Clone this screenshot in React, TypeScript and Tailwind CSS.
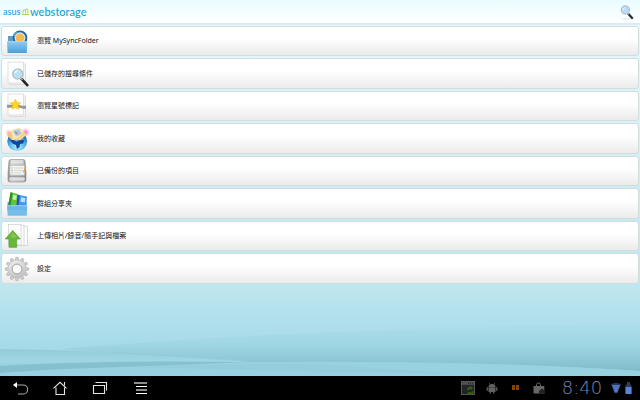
import type { ReactNode } from "react";

function Paper({ x = 5, y = 2 }: { x?: number; y?: number }) {
  return (
    <g stroke="#d4d4d4" strokeWidth="0.7">
      <rect x={x + 2} y={y + 2} width="15.5" height="20.5" fill="#f4f4f4" />
      <rect x={x} y={y} width="15.5" height="21" fill="#fdfdfd" />
    </g>
  );
}

function SyncFolderIcon() {
  return (
    <svg viewBox="0 0 28 28" className="size-7">
      <defs>
        <linearGradient id="syncFront" x1="0" y1="0" x2="0" y2="1">
          <stop offset="0" stopColor="#90ccf0" />
          <stop offset="1" stopColor="#4b9fda" />
        </linearGradient>
      </defs>
      <path d="M5 9h5.5l1.2 2H24v10H5z" fill="#5a9fcd" />
      <circle cx="17" cy="10.8" r="6.4" fill="#dfeaf0" stroke="#1d6ba6" strokeWidth="1.9" />
      <path d="M10.8 9a6.4 6.4 0 0 1 3.4-4" fill="none" stroke="#5aa5d6" strokeWidth="1.8" />
      <circle cx="17" cy="10.8" r="4.4" fill="#f9b94c" />
      <path d="M4 14.3h20.3l-.5 11.7H4.6z" fill="url(#syncFront)" />
      <path d="M4.3 14.7h19.6" stroke="#b5dff7" strokeWidth="0.7" />
    </svg>
  );
}

function SavedSearchIcon() {
  return (
    <svg viewBox="0 0 28 28" className="size-7">
      <Paper />
      <path d="M18.5 18.9l5.8 6.3" stroke="#262626" strokeWidth="2.6" strokeLinecap="round" />
      <path d="M17.6 17.8l2 2.2" stroke="#999" strokeWidth="1.6" />
      <circle cx="14.8" cy="14" r="5.1" fill="#b9e0f3" stroke="#b9bfc3" strokeWidth="1.4" />
      <path d="M12 13.5a3 3 0 0 1 3-2.7" fill="none" stroke="#e9f7fe" strokeWidth="1.4" />
    </svg>
  );
}

function StarredIcon() {
  return (
    <svg viewBox="0 0 28 28" className="size-7">
      <Paper />
      <path d="M4 12.8c4 0 5-.5 9-.3 4 0 5 1.6 10 1.3v3c-5 0-6-1.7-10-1.9-4 0-5 1.1-9 .9z" fill="#969696" />
      <path
        d="M12.4 7.2l1.6 3.2 3.7.5-2.7 2.6.6 3.8-3.2-1.8-3.4 1.8.7-3.8L7 10.9l3.7-.5z"
        fill="#ffd61f"
        stroke="#f4bd16"
        strokeWidth="0.6"
      />
    </svg>
  );
}

function FavoritesIcon() {
  return (
    <svg viewBox="0 0 28 28" className="size-7">
      <defs>
        <radialGradient id="globe" cx="0.5" cy="0.8" r="0.65">
          <stop offset="0" stopColor="#b5ecfd" />
          <stop offset="0.55" stopColor="#5cbcf0" />
          <stop offset="1" stopColor="#236fbb" />
        </radialGradient>
        <radialGradient id="pinkGlow">
          <stop offset="0" stopColor="#f94fd0" stopOpacity="0.9" />
          <stop offset="1" stopColor="#fb8fd0" stopOpacity="0" />
        </radialGradient>
        <radialGradient id="peachGlow">
          <stop offset="0" stopColor="#fb8a9c" stopOpacity="0.9" />
          <stop offset="1" stopColor="#fbc07a" stopOpacity="0" />
        </radialGradient>
      </defs>
      <circle cx="14.2" cy="16.2" r="9.9" fill="url(#globe)" />
      <path d="M6.5 14.5l4 .5 3 1.5 4-2 4 1-1.5 3-3 .5-.5 3-2.5 2-1-4-3.5-1.5z" fill="#12479a" />
      <circle cx="6" cy="8" r="4.2" fill="url(#peachGlow)" />
      <circle cx="22.5" cy="7.5" r="5" fill="url(#pinkGlow)" />
      <path d="M4 10.5l5-4 8 6.5-8 2z" fill="#f8c466" />
      <path d="M8.5 5l8.5-2.5 5.5 5.5-5 6-8 1z" fill="#f7e5b4" />
      <path d="M10 5.8l6-1.6 2.5 4.6-5.5 2.6z" fill="#9fcdf0" />
      <path d="M12 14.5l8.5-8 3.5 2.8-6.5 6z" fill="#f4c670" />
      <path d="M13.5 14l7-6M15.5 15l7-6" stroke="#fdf0cf" strokeWidth="0.9" />
      <path d="M12 7l2.5 2" stroke="#e46c69" strokeWidth="1.4" />
    </svg>
  );
}

function BackupIcon() {
  return (
    <svg viewBox="0 0 28 28" className="size-7">
      <defs>
        <linearGradient id="drive" x1="0" y1="0" x2="1" y2="0">
          <stop offset="0" stopColor="#8d8d8d" />
          <stop offset="0.2" stopColor="#d2d2d2" />
          <stop offset="0.85" stopColor="#bebebe" />
          <stop offset="1" stopColor="#818181" />
        </linearGradient>
      </defs>
      <path
        d="M7.5 2.5h13q1.3 0 1.5 1.5l1 12v7q0 2-2 2H7q-2 0-2-2v-7L6 4q.2-1.5 1.5-1.5z"
        fill="url(#drive)"
        stroke="#8a8a8a"
        strokeWidth="0.6"
      />
      <path d="M8 4h12M7.5 5.8h13" stroke="#f0f0f0" strokeWidth="1" />
      <rect x="7" y="8.5" width="14.5" height="9.5" fill="#f1f3ef" stroke="#b3b3b3" strokeWidth="0.4" />
      <path d="M11 11h9M11 13.4h9M11 15.8h7" stroke="#cdd0cb" strokeWidth="0.8" />
      <path d="M8.4 11h1.3M8.4 13.4h1.3M8.4 15.8h1.3" stroke="#7ea882" strokeWidth="0.9" />
      <path d="M23 9.5l-2.6 6" stroke="#e8a047" strokeWidth="1.3" />
      <path d="M5.6 19.3h16.8" stroke="#7d7d7d" strokeWidth="0.7" />
      <path d="M6.5 22h15" stroke="#dedede" strokeWidth="2.6" />
    </svg>
  );
}

function GroupShareIcon() {
  return (
    <svg viewBox="0 0 28 28" className="size-7">
      <path d="M4.6 12h19v8h-19z" fill="#4a98d2" />
      <path d="M7.5 2.3l7.5 1.6-1 15-9-1z" fill="#5fc53a" />
      <path d="M7.5 2.3l2 .4-2.2 15-2.3-.3z" fill="#318f28" />
      <path d="M10.2 4.8l3.6.7-.6 4.6-3.6-.6z" fill="#c8f0a9" />
      <path d="M14.5 4.7l9.5 1.7-1.4 14-9-1z" fill="#4595ec" />
      <path d="M14.5 4.7l2.2.4-1.5 14-2.1-.3z" fill="#1f55bd" />
      <path d="M18 7.3l4.4.8-.6 4.4-4.3-.7z" fill="#b9e2fa" />
      <path d="M4 15.3h20.3l-.5 10.5H4.7z" fill="#6db9ea" fillOpacity="0.92" />
      <path d="M4.2 15.8h20" stroke="#a5daf7" strokeWidth="0.8" fill="none" />
    </svg>
  );
}

function UploadIcon() {
  return (
    <svg viewBox="0 0 28 28" className="size-7">
      <g fill="#fcfcfc" stroke="#cdcdcd" strokeWidth="0.7">
        <rect x="12" y="4" width="12.5" height="19.5" />
        <rect x="8.5" y="3.2" width="12.5" height="20" />
        <rect x="5.5" y="2.5" width="12.5" height="20.5" />
      </g>
      <path
        d="M9.7 8.5L17.3 17h-3.6v8.3H6V17H2.3z"
        fill="#66b839"
        stroke="#57a031"
        strokeWidth="0.7"
        strokeLinejoin="round"
      />
      <path d="M9.7 10l4.5 5.6H7.4z" fill="#83c655" />
    </svg>
  );
}

const TEETH = [0, 30, 60, 90, 120, 150, 180, 210, 240, 270, 300, 330];

function SettingsIcon() {
  return (
    <svg viewBox="0 0 28 28" className="size-7">
      <defs>
        <linearGradient id="gear" x1="0" y1="0" x2="0.4" y2="1">
          <stop offset="0" stopColor="#f1f1f1" />
          <stop offset="1" stopColor="#c3c3c3" />
        </linearGradient>
      </defs>
      {TEETH.map((angle) => (
        <path
          key={angle}
          d="M12.2 5.5L12.9 2.3h2.2l.7 3.2z"
          fill="#d0d0d0"
          stroke="#aaa"
          strokeWidth="0.6"
          transform={`rotate(${angle} 14 14)`}
        />
      ))}
      <circle cx="14" cy="14" r="9" fill="url(#gear)" stroke="#bababa" strokeWidth="0.5" />
      <circle cx="14" cy="14" r="4.9" fill="#fafafa" stroke="#a3a3a3" strokeWidth="1" />
    </svg>
  );
}

const items: { label: string; icon: ReactNode }[] = [
  { label: "瀏覽 MySyncFolder", icon: <SyncFolderIcon /> },
  { label: "已儲存的搜尋條件", icon: <SavedSearchIcon /> },
  { label: "瀏覽星號標記", icon: <StarredIcon /> },
  { label: "我的收藏", icon: <FavoritesIcon /> },
  { label: "已備份的項目", icon: <BackupIcon /> },
  { label: "群組分享夾", icon: <GroupShareIcon /> },
  { label: "上傳相片/錄音/隨手記與檔案", icon: <UploadIcon /> },
  { label: "設定", icon: <SettingsIcon /> },
];

function Header() {
  return (
    <header className="flex h-[25px] shrink-0 items-center justify-between border-b-2 border-[#d9ecef] bg-linear-to-b from-[#e9fcff] to-white pl-[3px] pr-1.5">
      <h1 className="flex items-center font-['Lato','Open_Sans',sans-serif] text-[11px] leading-3 font-medium text-[#14a3d6]">
        <span className="w-[19px] text-[9px]">asus</span>
        <svg viewBox="0 0 8 8" className="mr-px size-[7px]" fill="none" stroke="#a3cf4c">
          <path d="M0 7.3h8" strokeWidth="1.2" />
          <path d="M1.2 6V3.5q0-1.6 1.4-1.6T4 3.500V6M4 3.500Q4 .9 5.300.9T6.700 3v3" strokeWidth="1.1" />
        </svg>
        <span>webstorage</span>
      </h1>
      <button type="button" aria-label="搜尋">
        <svg viewBox="0 0 14 16" className="h-4 w-3.5">
          <ellipse cx="7" cy="15" rx="5" ry="0.8" fill="#e4e8e9" />
          <path d="M8.5 10l3.6 4" stroke="#2b2b2b" strokeWidth="2.3" strokeLinecap="round" />
          <path d="M7.8 9l1.2 1.4" stroke="#aaa" strokeWidth="1.4" />
          <circle cx="5.4" cy="6" r="4.1" fill="#b4dcfb" stroke="#bbbec1" strokeWidth="1.2" />
          <path d="M3.3 5.800a2 2 0 0 1 2-2" stroke="#edf8ff" strokeWidth="1.1" fill="none" />
        </svg>
      </button>
    </header>
  );
}

function Waves() {
  return (
    <svg viewBox="0 0 640 56" preserveAspectRatio="none" className="mt-auto h-14 w-full">
      <defs>
        <linearGradient id="waveA" x1="0" y1="0" x2="0" y2="1">
          <stop offset="0" stopColor="#8fc9d6" stopOpacity="0.05" />
          <stop offset="0.4" stopColor="#8fc9d6" stopOpacity="0.25" />
          <stop offset="1" stopColor="#6fadbd" stopOpacity="0.7" />
        </linearGradient>
        <linearGradient id="waveB" x1="0" y1="0" x2="0" y2="1">
          <stop offset="0" stopColor="#83bcc9" stopOpacity="0.5" />
          <stop offset="0.6" stopColor="#9bd3e0" stopOpacity="0.5" />
        </linearGradient>
      </defs>
      <path d="M60 29Q200 17 360 11T640 4V51Q480 41 250 42Z" fill="url(#waveA)" />
      <path d="M0 29Q120 30 250 41L130 47L0 44Z" fill="url(#waveB)" />
      <path d="M250 42Q480 40 640 51V56H0V43Q120 46 250 42Z" fill="#98d1df" />
      <path d="M0 46Q90 40 250 42L120 47Q50 49 0 53Z" fill="#7fbac8" fillOpacity="0.75" />
      <path d="M130 47Q210 43 330 45L460 54Q280 51 130 47Z" fill="#8ac4d2" fillOpacity="0.25" />
    </svg>
  );
}

function NavButton({ label, children }: { label: string; children: ReactNode }) {
  return (
    <button type="button" aria-label={label} className="flex w-10 items-center justify-center">
      <svg viewBox="0 0 16 16" className="size-4" fill="none" stroke="#e4e4e4" strokeWidth="1.1">
        {children}
      </svg>
    </button>
  );
}

function SystemBar() {
  return (
    <footer className="flex h-6 shrink-0 items-center justify-between bg-black pr-2">
      <nav className="flex h-full">
        <NavButton label="返回">
          <path d="M4 5h7.2a4 4 0 0 1 0 9H6" stroke="#aaa" />
          <path d="M1 5l4-3v6z" fill="#fff" stroke="none" />
        </NavButton>
        <NavButton label="主畫面">
          <path d="M1.500 8.300L8 2.300l6.500 6M4 7.500v7h8.500v-7M12.500 2v3.500" />
        </NavButton>
        <NavButton label="最近使用的應用程式">
          <path d="M1.500 5.500h11v8h-11zM3.500 2.500h11v8" />
        </NavButton>
        <NavButton label="選單">
          <path d="M2 3h13M4 10h11" stroke="#8c8c8c" strokeWidth="2" />
          <path d="M4 6.500h11M4 13.500h11" stroke="#fff" strokeWidth="1" />
        </NavButton>
      </nav>
      <div className="flex items-center">
        <svg viewBox="0 0 15 15" className="mr-2.5 size-[15px]">
          <rect x="0.5" y="0.5" width="13" height="13" fill="#20252a" stroke="#555" />
          <path d="M1 2.500h12" stroke="#555" strokeWidth="2.500" />
          <path d="M7 2.500h5" stroke="#222" strokeDasharray="1 1" />
          <path d="M6.500 9a3 3 0 0 1 5-1.700M12 10.500a3 3 0 0 1-5 1.700" fill="none" stroke="#3c5d16" strokeWidth="1.700" />
          <path d="M11 5.500v3H8zM7 14v-3h3z" fill="#3c5d16" />
        </svg>
        <svg viewBox="0 0 12 12" className="mr-3.5 size-3" fill="#626262">
          <path d="M2.500 5a3.500 3 0 0 1 7 0z" />
          <path d="M2.500 5.300h7V10H8.300v1.500H7V10H5v1.500H3.700V10H2.500zM.6 5.300h1.300v3.500H.6zM10.100 5.300h1.300v3.500h-1.300z" />
          <path d="M3 .8l1.300 2M9 .8l-1.300 2" stroke="#626262" strokeWidth="0.6" />
        </svg>
        <svg viewBox="0 0 7 6" className="mr-3.5 h-1.5 w-[7px]" fill="#83430c">
          <path d="M0 0h3v5H0zM4 0h3v5H4z" />
        </svg>
        <svg viewBox="0 0 12 13" className="mr-3 h-[13px] w-3">
          <path d="M3.500 4V2.800Q3.500 1 5.500 1t2 1.800V4" fill="none" stroke="#666" />
          <path d="M.5 4h10.800v7.500H.5z" fill="#666" />
          <path d="M6 11.500V9l3-2.500L12 9v2.500z" fill="#222" />
        </svg>
        <time className="w-[50px] text-center font-['DejaVu_Sans',sans-serif] text-[18px] leading-6 font-extralight text-[#7488b8]">
          8:40
        </time>
        <svg viewBox="0 0 10 12" className="mr-1 ml-1 h-3 w-2.5">
          <path d="M0 2Q5 0 10 2L6.500 11h-3z" fill="#26365a" />
          <path d="M1 3h8L6.200 10.500H3.800z" fill="#5579c5" />
          <path d="M1.500 5h7M2.500 7.500h5" stroke="#3c5b9c" strokeWidth="0.5" />
        </svg>
        <svg viewBox="0 0 7 12" className="h-3 w-[7px]">
          <path d="M2 0h3v2l1.500 1.500V12h-6V3.500L2 2z" fill="#303b55" />
          <path d="M.5 5h6v7h-6z" fill="#5b84d4" />
        </svg>
      </div>
    </footer>
  );
}

export default function App() {
  return (
    <div className="flex min-h-screen flex-col bg-black">
      <Header />
      <main className="flex flex-1 flex-col bg-linear-to-b from-[#e6f9fc] from-0% via-[#bde6ef] via-75% to-[#a1d8e7] to-95%">
        <ul className="px-px">
          {items.map((item) => (
            <li key={item.label} className="flex py-px odd:h-8 even:h-[33px]">
              <button
                type="button"
                className="flex w-full items-center gap-1.5 rounded-[3px] border border-[#d3dde0] bg-linear-to-b from-white from-40% to-[#ebebeb] pl-px text-left font-['Noto_Sans','Noto_Sans_CJK_TC',sans-serif] text-[7px] leading-3 text-[#111]"
              >
                {item.icon}
                <span>{item.label}</span>
              </button>
            </li>
          ))}
        </ul>
        <Waves />
      </main>
      <SystemBar />
    </div>
  );
}
